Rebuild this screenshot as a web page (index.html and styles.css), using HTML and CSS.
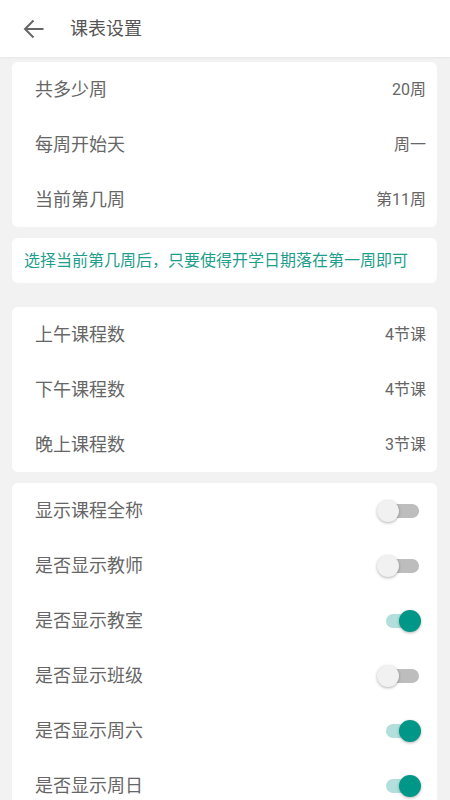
FILE: index.html
```html
<!DOCTYPE html>
<html lang="zh-CN">
<head>
    <meta charset="UTF-8">
    <meta name="viewport" content="width=device-width, initial-scale=1.0">
    <title>课表设置</title>
    <link rel="stylesheet" href="styles.css">
</head>
<body>
    <header class="toolbar">
        <svg class="back" width="24" height="24" viewBox="0 0 24 24">
            <path d="M21.5 12H3.5M11.5 3.5L3 12l8.5 8.5" fill="none" stroke="#666" stroke-width="2"/>
        </svg>
        <h1>课表设置</h1>
    </header>

    <div class="content">
        <div class="card">
            <div class="row"><span class="label">共多少周</span><span class="value">20周</span></div>
            <div class="row"><span class="label">每周开始天</span><span class="value">周一</span></div>
            <div class="row"><span class="label">当前第几周</span><span class="value">第11周</span></div>
        </div>

        <div class="card tip">选择当前第几周后，只要使得开学日期落在第一周即可</div>

        <div class="card section-gap">
            <div class="row"><span class="label">上午课程数</span><span class="value">4节课</span></div>
            <div class="row"><span class="label">下午课程数</span><span class="value">4节课</span></div>
            <div class="row"><span class="label">晚上课程数</span><span class="value">3节课</span></div>
        </div>

        <div class="card">
            <div class="row"><span class="label">显示课程全称</span><span class="switch"></span></div>
            <div class="row"><span class="label">是否显示教师</span><span class="switch"></span></div>
            <div class="row"><span class="label">是否显示教室</span><span class="switch on"></span></div>
            <div class="row"><span class="label">是否显示班级</span><span class="switch"></span></div>
            <div class="row"><span class="label">是否显示周六</span><span class="switch on"></span></div>
            <div class="row"><span class="label">是否显示周日</span><span class="switch on"></span></div>
        </div>
    </div>
</body>
</html>
```

FILE: styles.css
```css
body {
    margin: 0;
    background-color: #f2f2f2;
    font-family: Roboto, "Noto Sans CJK SC", sans-serif;
    color: #666;
    overflow: hidden;
}
.toolbar {
    height: 57px;
    box-sizing: border-box;
    padding: 0 0 3px 22px;
    background-color: #fff;
    display: flex;
    align-items: center;
    box-shadow: 0 1px 2px rgba(0, 0, 0, 0.05);
}
.back {
    display: block;
    margin: 3px 24px 0 0;
}
.toolbar h1 {
    margin: 0;
    font-size: 18px;
    font-weight: normal;
    color: #555;
}
.content {
    padding: 5px 13px 0 12px;
    display: flex;
    flex-direction: column;
    gap: 11px;
}
.card {
    background-color: #fff;
    border-radius: 6px;
}
.section-gap {
    margin-top: 13px;
}
.row {
    height: 55px;
    box-sizing: border-box;
    display: flex;
    align-items: center;
    justify-content: space-between;
    padding: 0 11px 4px 23px;
}
.label {
    font-size: 18px;
    color: #666;
}
.value {
    font-size: 16px;
    color: #666;
}
.tip {
    height: 45px;
    box-sizing: border-box;
    display: flex;
    align-items: center;
    padding: 0 0 3px 12px;
    font-size: 16px;
    color: #1f9e8d;
}
.switch {
    position: relative;
    width: 44px;
    height: 24px;
    margin: 4px 5px 0 0;
}
.switch::before {
    content: "";
    position: absolute;
    left: 9px;
    top: 5px;
    width: 33px;
    height: 14px;
    border-radius: 7px;
    background-color: #bdbdbd;
}
.switch::after {
    content: "";
    position: absolute;
    left: 0;
    top: 1px;
    width: 22px;
    height: 22px;
    border-radius: 50%;
    background-color: #f1f1f1;
    box-shadow: 0 1px 3px rgba(0, 0, 0, 0.3);
}
.switch.on::before {
    background-color: #b2dfdb;
}
.switch.on::after {
    left: 22px;
    background-color: #009688;
}
```
